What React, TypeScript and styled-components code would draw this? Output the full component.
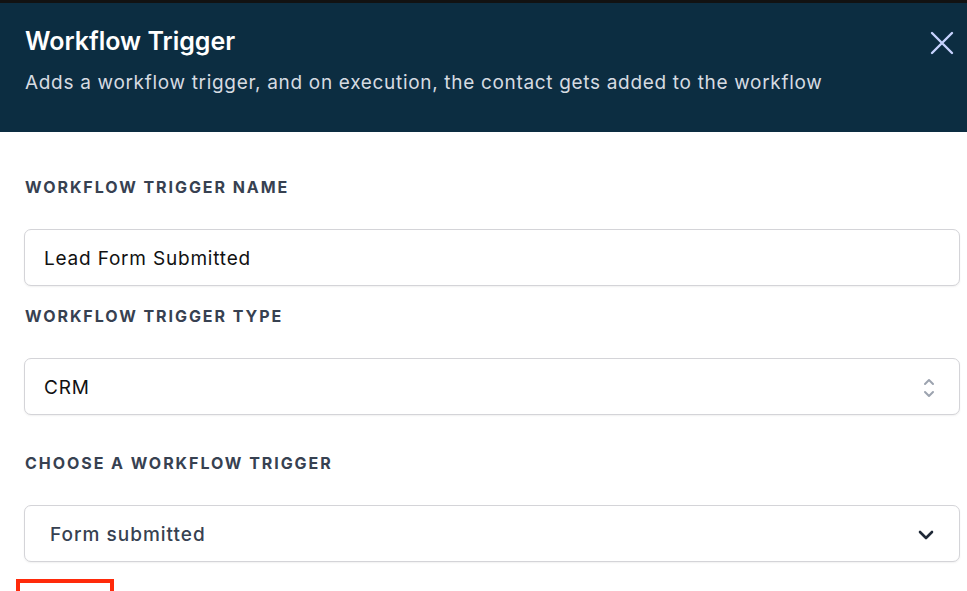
import React from "react";
import styled, { createGlobalStyle } from "styled-components";

const Global = createGlobalStyle`
  html, body { margin: 0; padding: 0; background: #ffffff; }
  body { font-family: Inter, "Noto Sans", sans-serif; -webkit-font-smoothing: antialiased; }
  * { box-sizing: border-box; }
`;

const Page = styled.div`
  width: 967px;
  height: 591px;
  overflow: hidden;
  display: flex;
  flex-direction: column;
  background: #fff;
`;

const TopStrip = styled.div`
  height: 3px;
  background: #121212;
  flex-shrink: 0;
`;

const Header = styled.header`
  height: 129px;
  flex-shrink: 0;
  background: #0c2d41;
  padding: 23px 11px 0 25px;
  display: flex;
  justify-content: space-between;
  align-items: flex-start;
`;

const HeaderText = styled.div`
  display: flex;
  flex-direction: column;
  gap: 14px;
`;

const Title = styled.h1`
  margin: 0;
  font-size: 25px;
  line-height: 30px;
  font-weight: 600;
  color: #ffffff;
  letter-spacing: 0px;
`;

const Subtitle = styled.p`
  margin: 0;
  font-size: 19px;
  line-height: 26px;
  color: #d6dbe1;
  font-weight: 400;
  letter-spacing: 0.68px;
`;

const CloseButton = styled.button`
  background: none;
  border: none;
  padding: 0;
  margin-top: 3px;
  width: 28px;
  height: 28px;
  display: flex;
  align-items: center;
  justify-content: center;
  cursor: pointer;
`;

const Body = styled.div`
  padding: 45px 7px 0 24px;
  display: flex;
  flex-direction: column;
`;

const Label = styled.div<{ $mt?: number }>`
  margin-top: ${(p) => p.$mt ?? 0}px;
  padding-left: 1px;
  font-size: 16px;
  line-height: 20px;
  font-weight: 700;
  letter-spacing: 1.95px;
  text-transform: uppercase;
  color: #374151;
`;

const Field = styled.div<{ $pl?: number }>`
  margin-top: 32px;
  height: 57px;
  border: 1px solid #d4d4d8;
  border-radius: 7px;
  box-shadow: 0 1px 2px rgba(0, 0, 0, 0.06);
  display: flex;
  align-items: center;
  justify-content: space-between;
  padding: 2px 22px 0 ${(p) => p.$pl ?? 19}px;
  background: #fff;
`;

const FieldText = styled.span<{ $muted?: boolean }>`
  font-size: 19px;
  letter-spacing: ${(p) => (p.$muted ? 1 : 0.8)}px;
  color: ${(p) => (p.$muted ? "#374151" : "#111111")};
  font-weight: ${(p) => (p.$muted ? 500 : 400)};
`;

const Highlight = styled.div`
  margin-top: 17px;
  margin-left: -8px;
  width: 98px;
  height: 30px;
  border: 4px solid #ff2a0a;
`;

export default function App() {
  return (
    <Page>
      <Global />
      <TopStrip />
      <Header>
        <HeaderText>
          <Title>Workflow Trigger</Title>
          <Subtitle>
            Adds a workflow trigger, and on execution, the contact gets added to the workflow
          </Subtitle>
        </HeaderText>
        <CloseButton aria-label="Close">
          <svg width="24" height="24" viewBox="0 0 24 24" fill="none">
            <path d="M2 2 L22 22 M22 2 L2 22" stroke="#c7d2fe" strokeWidth="2.4" strokeLinecap="round" />
          </svg>
        </CloseButton>
      </Header>
      <Body>
        <Label>Workflow Trigger Name</Label>
        <Field>
          <FieldText>Lead Form Submitted</FieldText>
        </Field>
        <Label $mt={20}>Workflow Trigger Type</Label>
        <Field>
          <FieldText>CRM</FieldText>
          <svg width="14" height="22" viewBox="0 0 14 22" fill="none" style={{ marginRight: 1 }}>
            <path d="M3 7 L7 3 L11 7 M3 15 L7 19 L11 15" stroke="#9ca3af" strokeWidth="2" strokeLinecap="round" strokeLinejoin="round" />
          </svg>
        </Field>
        <Label $mt={38}>Choose a Workflow Trigger</Label>
        <Field $pl={25}>
          <FieldText $muted>Form submitted</FieldText>
          <svg width="16" height="10" viewBox="0 0 16 10" fill="none" style={{ marginRight: 3 }}>
            <path d="M2 2 L8 8 L14 2" stroke="#1f2937" strokeWidth="2.6" strokeLinecap="round" strokeLinejoin="round" />
          </svg>
        </Field>
        <Highlight />
      </Body>
    </Page>
  );
}
